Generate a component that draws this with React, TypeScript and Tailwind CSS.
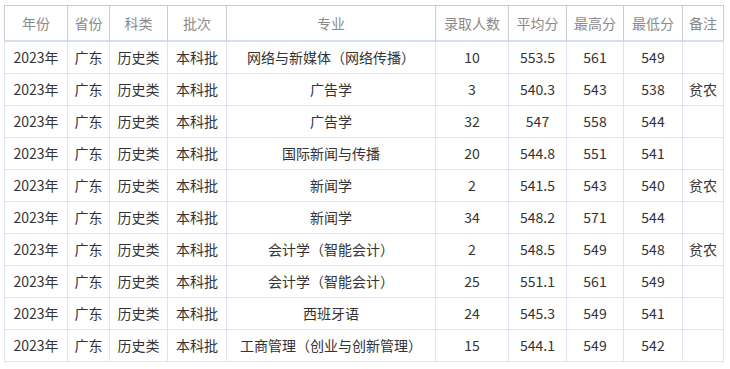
import React from "react";

const rows = [
  ["网络与新媒体（网络传播）", "10", "553.5", "561", "549", ""],
  ["广告学", "3", "540.3", "543", "538", "贫农"],
  ["广告学", "32", "547", "558", "544", ""],
  ["国际新闻与传播", "20", "544.8", "551", "541", ""],
  ["新闻学", "2", "541.5", "543", "540", "贫农"],
  ["新闻学", "34", "548.2", "571", "544", ""],
  ["会计学（智能会计）", "2", "548.5", "549", "548", "贫农"],
  ["会计学（智能会计）", "25", "551.1", "561", "549", ""],
  ["西班牙语", "24", "545.3", "549", "541", ""],
  ["工商管理（创业与创新管理）", "15", "544.1", "549", "542", ""],
];

const widths = [63, 42, 58, 59, 209, 73, 58, 57, 59, 41];
const headers = ["年份", "省份", "科类", "批次", "专业", "录取人数", "平均分", "最高分", "最低分", "备注"];

export default function App() {
  return (
    <div
      className="w-[730px] h-[369px] bg-white pl-[4px] pt-[5px]"
      style={{ fontFamily: '"Microsoft YaHei", "Noto Sans CJK SC", "Noto Sans", sans-serif' }}
    >
      <table className="border-separate border-spacing-0 table-fixed text-[14px]">
        <colgroup>
          {widths.map((w, i) => (
            <col key={i} style={{ width: w + (i === 0 ? 1 : 0) }} />
          ))}
        </colgroup>
        <thead>
          <tr className="h-[37px]">
            {headers.map((h, i) => (
              <th
                key={i}
                className={`font-normal text-[#8a8a8a] text-center border-t border-r border-b-2 border-t-[#cccccc] border-r-[#cccccc] border-b-[#d6e0f5] p-0 ${i === 0 ? "border-l border-l-[#cccccc]" : ""}`}
              >
                {h}
              </th>
            ))}
          </tr>
        </thead>
        <tbody>
          {rows.map((r, ri) => {
            const cells = ["2023年", "广东", "历史类", "本科批", ...r];
            return (
              <tr key={ri} className="h-[32px]">
                {cells.map((c, i) => (
                  <td
                    key={i}
                    className={`text-[#333333] text-center border-r border-b border-[#dce4f4] p-0 whitespace-nowrap ${i === 0 ? "border-l" : ""}`}
                  >
                    {c}
                  </td>
                ))}
              </tr>
            );
          })}
        </tbody>
      </table>
    </div>
  );
}
